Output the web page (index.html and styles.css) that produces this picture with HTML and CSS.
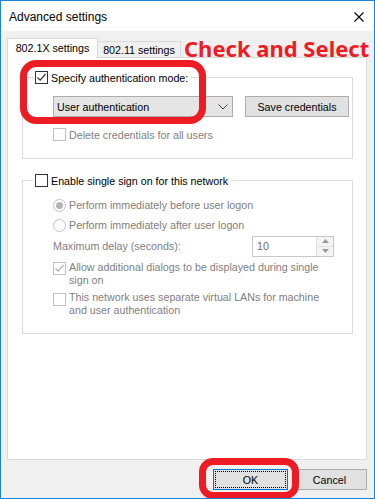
FILE: index.html
```html
<!DOCTYPE html>
<html lang="en">
<head>
  <meta charset="UTF-8">
  <title>Advanced settings</title>
  <meta name="viewport" content="width=device-width, initial-scale=1.0">
  <link rel="stylesheet" href="styles.css">
</head>
<body>
<div class="window">
  <div class="titlebar">
    <span class="title">Advanced settings</span>
    <svg class="close" width="10" height="10" viewBox="0 0 10 10"><path d="M0.5 0.5 L9.5 9.5 M9.5 0.5 L0.5 9.5" stroke="#000" stroke-width="1.1" fill="none"/></svg>
  </div>

  <div class="content">
    <div class="tabs">
      <div class="tab active">802.1X settings</div>
      <div class="tab">802.11 settings</div>
      <div class="note">Check and Select</div>
    </div>

    <div class="panel">
      <div class="group group-auth">
        <div class="group-head">
          <span class="check">
            <svg width="11" height="11" viewBox="0 0 11 11"><path d="M1.5 5.5 L4.2 8.2 L9.5 2" stroke="#333" stroke-width="1.2" fill="none"/></svg>
          </span>
          Specify authentication mode:
        </div>
        <div class="auth-row">
          <div class="select">
            <span>User authentication</span>
            <svg width="10" height="6" viewBox="0 0 10 6"><path d="M0.5 0.5 L5 5 L9.5 0.5" stroke="#444" stroke-width="1" fill="none"/></svg>
          </div>
          <button class="btn save">Save credentials</button>
        </div>
        <div class="row off delete-row">
          <span class="check"></span>
          Delete credentials for all users
        </div>
      </div>

      <div class="group group-sso">
        <div class="group-head">
          <span class="check"></span>
          Enable single sign on for this network
        </div>
        <div class="row off radio-row first">
          <span class="radio on"></span>
          Perform immediately before user logon
        </div>
        <div class="row off radio-row">
          <span class="radio"></span>
          Perform immediately after user logon
        </div>
        <div class="row off delay-row">
          <span>Maximum delay (seconds):</span>
          <div class="spin">
            <span class="spin-value">10</span>
            <span class="spin-btns">
              <span class="spin-btn"><svg width="7" height="4" viewBox="0 0 7 4"><path d="M0 4 L3.5 0 L7 4 Z" fill="#9a9a9a"/></svg></span>
              <span class="spin-btn"><svg width="7" height="4" viewBox="0 0 7 4"><path d="M0 0 L3.5 4 L7 0 Z" fill="#9a9a9a"/></svg></span>
            </span>
          </div>
        </div>
        <div class="row off wrap-row allow-row">
          <span class="check">
            <svg width="11" height="11" viewBox="0 0 11 11"><path d="M1.5 5.5 L4.2 8.2 L9.5 2" stroke="#b0b0b0" stroke-width="1.2" fill="none"/></svg>
          </span>
          <span class="wrap-text">Allow additional dialogs to be displayed during single sign on</span>
        </div>
        <div class="row off wrap-row vlan-row">
          <span class="check"></span>
          <span class="wrap-text">This network uses separate virtual LANs for machine and user authentication</span>
        </div>
      </div>
    </div>

    <div class="actions">
      <button class="btn ok">OK</button>
      <button class="btn">Cancel</button>
    </div>
  </div>

  <!-- annotation rings drawn over the dialog -->
  <div class="ring ring-auth"></div>
  <div class="ring ring-ok"></div>
</div>
</body>
</html>
```

FILE: styles.css
```css
body {
  margin: 0;
  background: #fff;
  font-family: "Liberation Sans", Arial, sans-serif;
  font-size: 10.7px;
  color: #000;
}
.window {
  position: relative;
  width: 375px;
  height: 499px;
  box-sizing: border-box;
  border: 1px solid #1883d7;
  background: #f0f0f0;
  overflow: hidden;
}
.titlebar {
  height: 30px;
  background: #fff;
  display: flex;
  align-items: center;
  justify-content: space-between;
  padding: 0 10px 0 8px;
}
.title {
  font-size: 12px;
  margin-top: 1px;
}
.close {
  margin-top: 1px;
}
.content {
  padding: 7px 0 0 6px;
}

/* Tabs */
.tabs {
  display: flex;
  align-items: flex-end;
  height: 19px;
}
.tab {
  height: 16px;
  box-sizing: border-box;
  width: 84px;
  border: 1px solid #d9d9d9;
  border-bottom: none;
  margin-left: -1px;
  text-align: center;
  line-height: 16px;
  background: #f0f0f0;
  white-space: nowrap;
}
.tab.active {
  position: relative;
  z-index: 1;
  height: 20px;
  width: 91px;
  margin-left: 0;
  margin-bottom: -1px;
  background: #fff;
  line-height: 18px;
}
.note {
  align-self: center;
  margin-left: 3px;
  margin-top: 1px;
  color: #ed1c24;
  font-family: "Noto Sans", sans-serif;
  font-weight: bold;
  font-size: 22px;
  line-height: 20px;
  white-space: nowrap;
}
.panel {
  width: 360px;
  height: 403px;
  box-sizing: border-box;
  border: 1px solid #d9d9d9;
  background: #fff;
  padding-top: 19px;
}

/* Group boxes */
.group {
  border: 1px solid #dcdcdc;
  margin: 0 13px 0 14px;
}
.group-sso {
  margin-top: 21px;
  padding-bottom: 16px;
}
.group-auth {
  padding-bottom: 16px;
}
.group-head {
  display: flex;
  align-items: center;
  width: fit-content;
  height: 15px;
  margin: -8px 0 0 10px;
  padding: 0 3px 0 2px;
  background: #fff;
}
.check {
  flex: none;
  width: 13px;
  height: 13px;
  box-sizing: border-box;
  border: 1px solid #333;
  background: #fff;
  margin-right: 3px;
  display: flex;
  align-items: center;
  justify-content: center;
}
.auth-row {
  display: flex;
  margin: 11px 0 0 30px;
}
.select {
  width: 180px;
  height: 21px;
  box-sizing: border-box;
  border: 1px solid #acacac;
  background: #e5e5e5;
  display: flex;
  align-items: center;
  justify-content: space-between;
  padding: 0 4px 0 3px;
}
.btn {
  height: 21px;
  box-sizing: border-box;
  border: 1px solid #adadad;
  background: #e1e1e1;
  font-family: inherit;
  font-size: 10.7px;
  color: #000;
  padding: 0;
}
.save {
  width: 104px;
  margin-left: 12px;
}

/* Rows */
.row {
  display: flex;
  align-items: center;
  padding-left: 30px;
}
.row.off {
  color: #808080;
}
.row.off .check {
  border-color: #c2c2c2;
}
.delete-row {
  height: 15px;
  margin-top: 10px;
}
.radio-row {
  height: 20px;
}
.radio-row.first {
  margin-top: 7px;
}
.radio {
  flex: none;
  width: 13px;
  height: 13px;
  box-sizing: border-box;
  border: 1px solid #c2c2c2;
  border-radius: 50%;
  margin-right: 3px;
  display: flex;
  align-items: center;
  justify-content: center;
}
.radio.on::after {
  content: "";
  width: 7px;
  height: 7px;
  border-radius: 50%;
  background: #b4b4b4;
}
.delay-row {
  height: 22px;
  justify-content: space-between;
  padding-right: 18px;
}
.spin {
  width: 82px;
  height: 21px;
  box-sizing: border-box;
  border: 1px solid #c8c8c8;
  display: flex;
  align-items: center;
  justify-content: space-between;
  padding-left: 4px;
  color: #6d6d6d;
}
.spin-btns {
  display: flex;
  flex-direction: column;
  width: 16px;
  height: 19px;
  border-left: 1px solid #e0e0e0;
}
.spin-btn {
  flex: 1;
  display: flex;
  align-items: center;
  justify-content: center;
  background: #f4f4f4;
}
.spin-btn + .spin-btn {
  border-top: 1px solid #e0e0e0;
}
.wrap-row {
  align-items: flex-start;
  line-height: 13px;
}
.wrap-text {
  max-width: 262px;
}
.allow-row {
  margin-top: 4px;
}
.allow-row .check {
  margin-top: 1px;
}
.vlan-row {
  margin-top: 4px;
}
.vlan-row .check {
  margin-top: 2px;
}

/* Dialog buttons */
.actions {
  display: flex;
  justify-content: flex-end;
  gap: 4px;
  width: 360px;
  margin-top: 9px;
}
.actions .btn {
  width: 75px;
}
.btn.ok {
  position: relative;
  border-color: #0078d7;
}
.btn.ok::after {
  content: "";
  position: absolute;
  inset: 1px;
  border: 1px dotted #000;
}

/* Red annotation rings */
.ring {
  position: absolute;
  box-sizing: border-box;
  border: 7px solid #ed1c24;
}
.ring-auth {
  left: 19px;
  top: 59px;
  width: 186px;
  height: 64px;
  border-radius: 16px;
}
.ring-ok {
  left: 198px;
  top: 457px;
  width: 100px;
  height: 41px;
  border-radius: 14px;
}
```
